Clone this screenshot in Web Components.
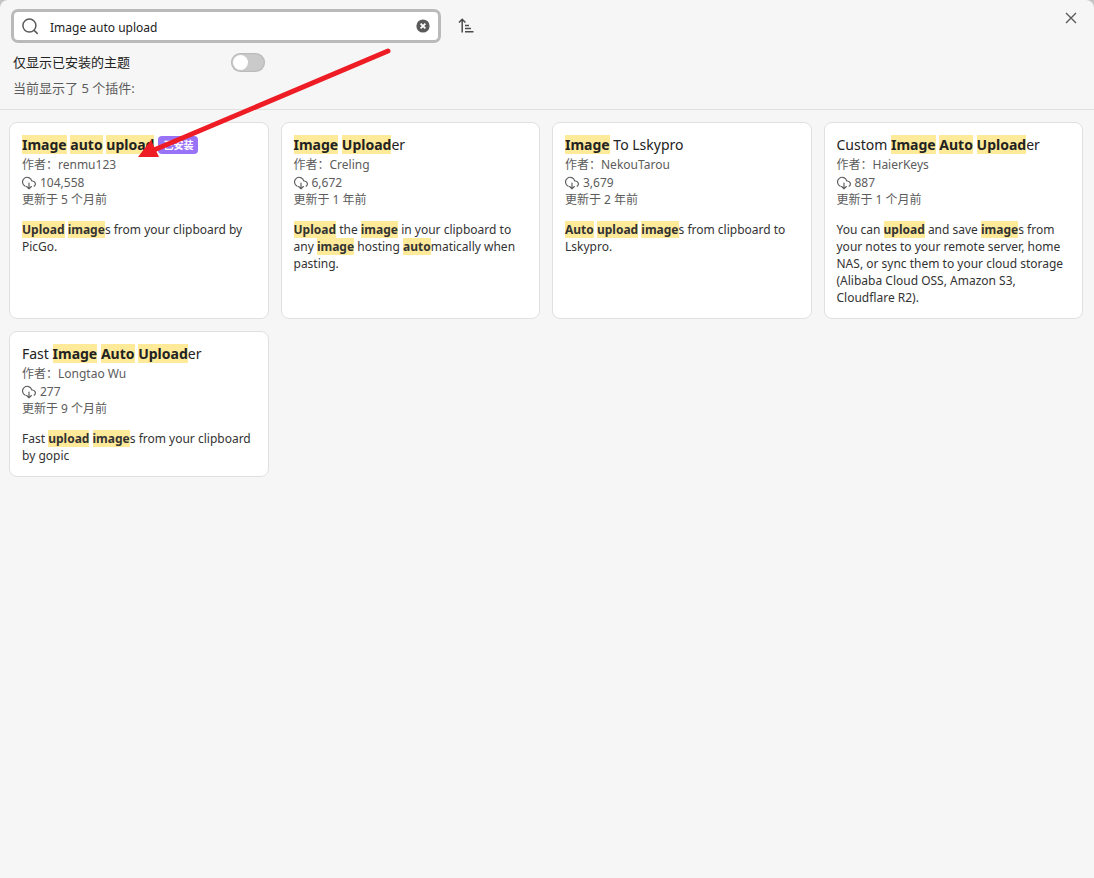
<!DOCTYPE html>
<html lang="zh-CN">
<head>
<meta charset="utf-8">
<title>社区插件</title>
<style>
  html { background: #c4c4c4; }
  body {
    margin: 0;
    font: 13px/17px "Noto Sans", "Noto Sans CJK SC", sans-serif;
    color: #222;
  }
</style>
</head>
<body>
<plugin-browser>
  <search-box slot="search" value="Image auto upload"></search-box>
  <sort-button slot="search"></sort-button>
  <toggle-row slot="filter">仅显示已安装的主题</toggle-row>
  <span slot="summary">当前显示了 5 个插件:</span>

  <plugin-card author="renmu123" downloads="104,558" updated="5 个月前" installed>
    <hit-text slot="name" text="*Image* *auto* *upload*"></hit-text>
    <hit-text text="*Upload* *image*s from your clipboard by PicGo."></hit-text>
  </plugin-card>
  <plugin-card author="Creling" downloads="6,672" updated="1 年前">
    <hit-text slot="name" text="*Image* *Upload*er"></hit-text>
    <hit-text text="*Upload* the *image* in your clipboard to any *image* hosting *auto*matically when pasting."></hit-text>
  </plugin-card>
  <plugin-card author="NekouTarou" downloads="3,679" updated="2 年前">
    <hit-text slot="name" text="*Image* To Lskypro"></hit-text>
    <hit-text text="*Auto* *upload* *image*s from clipboard to Lskypro."></hit-text>
  </plugin-card>
  <plugin-card author="HaierKeys" downloads="887" updated="1 个月前">
    <hit-text slot="name" text="Custom *Image* *Auto* *Upload*er"></hit-text>
    <hit-text text="You can *upload* and save *image*s from your notes to your remote server, home NAS, or sync them to your cloud storage (Alibaba Cloud OSS, Amazon S3, Cloudflare R2)."></hit-text>
  </plugin-card>
  <plugin-card author="Longtao Wu" downloads="277" updated="9 个月前">
    <hit-text slot="name" text="Fast *Image* *Auto* *Upload*er"></hit-text>
    <hit-text text="Fast *upload* *image*s from your clipboard by gopic"></hit-text>
  </plugin-card>
</plugin-browser>
<pointer-arrow></pointer-arrow>

<script>
const define = (name, html, setup) => {
  const template = document.createElement('template');
  template.innerHTML = html;
  customElements.define(name, class extends HTMLElement {
    connectedCallback() {
      if (this.shadowRoot) return;
      const root = this.attachShadow({ mode: 'open' });
      root.append(template.content.cloneNode(true));
      if (setup) setup(this, root);
    }
  });
};

define('plugin-browser', `
  <style>
    :host { display: flex; flex-direction: column; position: relative; min-height: 100vh; background: #f6f6f6; border-radius: 8px 8px 0 0; }
    header { border-bottom: 1px solid #e0e0e0; padding: 9px 11px 8px; }
    .search { display: flex; align-items: center; gap: 16px; margin-bottom: 6px; }
    .summary { color: #5c5c5c; padding: 0 2px; line-height: 26px; }
    .grid { display: grid; grid-template-columns: repeat(auto-fill, minmax(240px, 1fr)); gap: 12px; padding: 12px 11px 12px 9px; }
    .close { position: absolute; top: 6px; right: 11px; width: 24px; height: 24px; padding: 0; border: 0; background: none; color: #5a5a5a; display: grid; place-items: center; }
  </style>
  <header>
    <div class="search"><slot name="search"></slot></div>
    <slot name="filter"></slot>
    <div class="summary"><slot name="summary"></slot></div>
  </header>
  <main class="grid"><slot></slot></main>
  <button class="close" aria-label="关闭"><svg width="12" height="12" viewBox="0 0 12 12" fill="none" stroke="currentColor" stroke-width="1.400"><path d="M1 1l10 10M11 1L1 11"/></svg></button>
`);

define('search-box', `
  <style>
    :host { display: flex; align-items: center; box-sizing: border-box; width: 430px; height: 34px; border: 3px solid #bababa; border-radius: 7px; background: #fff; padding: 0 8px; }
    svg { flex: none; display: block; }
    input { flex: 1; min-width: 0; margin: 0 0 0 11px; padding: 2px 0 0; border: 0; outline: 0; background: none; font: inherit; font-size: 12px; color: #222; height: 20px; }
    button { border: 0; padding: 0; background: none; }
  </style>
  <svg width="17" height="17" viewBox="0 0 17 17" fill="none" stroke="#5a5a5a" stroke-width="1.500" stroke-linecap="round"><circle cx="7.400" cy="7.600" r="6.500"/><path d="M12.200 12.400l3 3"/></svg>
  <input type="text" aria-label="搜索">
  <button aria-label="清除"><svg width="14" height="14" viewBox="0 0 14 14"><circle cx="7" cy="7" r="6.600" fill="#5a5a5a"/><path d="M4.600 4.600l4.800 4.800M9.400 4.600l-4.800 4.800" stroke="#fff" stroke-width="1.800"/></svg></button>
`, (host, root) => { root.querySelector('input').value = host.getAttribute('value'); });

define('sort-button', `
  <style>
    :host { display: block; }
    button { display: block; border: 0; padding: 0; background: none; color: #4a4a4a; }
    svg { display: block; }
  </style>
  <button aria-label="排序"><svg width="18" height="18" viewBox="0 0 18 18" fill="none" stroke="currentColor" stroke-width="1.500"><path d="M5.200 15.500V2.500M2 5.500L5.200 2.300l3.200 3.200M8 8.500h4M8 11.500h6M8 14.700h8.500"/></svg></button>
`);

define('toggle-row', `
  <style>
    :host { display: block; }
    label { display: flex; align-items: center; justify-content: space-between; width: 252px; height: 26px; padding: 0 2px; }
    input { appearance: none; margin: 0; width: 34px; height: 19px; border-radius: 10px; background: #cacaca; box-shadow: inset 0 0 2px #0004; display: flex; align-items: center; padding: 0 2px; }
    input::before { content: ""; width: 15px; height: 15px; border-radius: 50%; background: #fff; }
    input:checked { justify-content: flex-end; background: #8a6cf0; }
  </style>
  <label><slot></slot><input type="checkbox" role="switch"></label>
`);

define('hit-text', `
  <style>
    :host { display: inline; }
    mark { background: #ffea99; color: inherit; font-weight: 700; }
  </style><span></span>
`, (host, root) => {
  const out = root.querySelector('span');
  host.getAttribute('text').split('*').forEach((part, i) => {
    if (i % 2) {
      const mark = document.createElement('mark');
      mark.textContent = part;
      out.append(mark);
    } else if (part) out.append(part);
  });
});

define('plugin-card', `
  <style>
    :host { display: block; box-sizing: border-box; border: 1px solid #e0e0e0; border-radius: 8px; background: #fff; padding: 12px; }
    h3 { display: flex; align-items: center; gap: 4px; margin: 0 0 1px; font-size: 14px; line-height: 20px; font-weight: 400; }
    .flair { background: #9873f7; color: #fff; font-size: 10px; line-height: 18px; font-weight: 700; border-radius: 4px; padding: 0 5px; }
    .meta { font-size: 12px; line-height: 18px; color: #5c5c5c; display: flex; align-items: center; gap: 4px; }
    .count { line-height: 17px; }
    p { margin: 12px 0 0; font-size: 12px; line-height: 17px; color: #333; }
  </style>
  <h3><slot name="name"></slot></h3>
  <div class="meta author"></div>
  <div class="meta count"><svg width="14" height="14" viewBox="0 0 24 24" fill="none" stroke="currentColor" stroke-width="2" stroke-linecap="round" stroke-linejoin="round"><path d="M8 18l4 4 4-4M12 12v10M20.900 17.500A5 5 0 0 0 18 8.500h-1.300A8 8 0 1 0 5.500 17.500"/></svg><span class="downloads"></span></div>
  <div class="meta updated"></div>
  <p><slot></slot></p>
`, (host, root) => {
  const set = (cls, text) => { root.querySelector(cls).textContent = text; };
  set('.author', '作者：' + host.getAttribute('author'));
  set('.downloads', host.getAttribute('downloads'));
  set('.updated', '更新于 ' + host.getAttribute('updated'));
  if (host.hasAttribute('installed')) {
    const flair = document.createElement('span');
    flair.className = 'flair';
    flair.textContent = '已安装';
    root.querySelector('h3').append(flair);
  }
});

define('pointer-arrow', `
  <style>
    :host { display: block; position: absolute; left: 130px; top: 40px; pointer-events: none; }
    svg { display: block; }
  </style>
  <svg width="270" height="126" viewBox="130 40 270 126"><path d="M388 51L154 150" stroke="#ee1c25" stroke-width="5" stroke-linecap="round"/><path d="M138 157l13-17 8 17z" fill="#ee1c25"/></svg>
`);
</script>
</body>
</html>
